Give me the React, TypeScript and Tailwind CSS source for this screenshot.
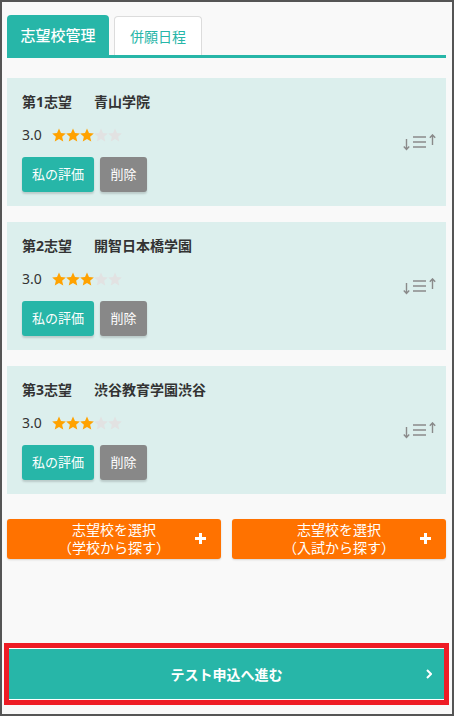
import React from "react";

const TEAL = "bg-[#27b6a8]";

const schools = [
  { rank: "第1志望", name: "青山学院" },
  { rank: "第2志望", name: "開智日本橋学園" },
  { rank: "第3志望", name: "渋谷教育学園渋谷" },
];

const Star = ({ on }: { on: boolean }) => (
  <svg width="14" height="14" viewBox="1 1.2 22 21">
    <path
      d="M12 1.5l3.1 7.1 7.6.7-5.8 5 1.8 7.5L12 17.8l-6.7 4 1.8-7.5-5.8-5 7.6-.7z"
      fill={on ? "#ffa200" : "#e2e2e2"}
    />
  </svg>
);

const SortIcon = () => (
  <svg width="34" height="17" viewBox="0 0 34 17" fill="none" stroke="#8a8a8a" strokeWidth="1.4">
    <path d="M3.5 5v10.5M0.8 12.6l2.7 2.9 2.7-2.9" />
    <path d="M10 3h13M10 8h13M10 13h13" strokeWidth="1.6" />
    <path d="M29.5 11V1M26.8 3.8l2.7-2.9 2.7 2.9" />
  </svg>
);

const Plus = () => (
  <svg width="11" height="11" viewBox="0 0 11 11">
    <rect x="4" y="0" width="3" height="11" fill="white" />
    <rect x="0" y="4" width="11" height="3" fill="white" />
  </svg>
);

const SchoolCard = ({ rank, name }: { rank: string; name: string }) => (
  <div className="flex h-[128px] items-center bg-[#dcefed] pl-[15px] pr-[9px]">
    <div className="flex-1 self-start pt-[14px]">
      <p className="text-[14px] font-bold leading-[20px] text-[#333]">
        <span className="inline-block w-[72px]">{rank}</span>
        {name}
      </p>
      <div className="mt-[13px] flex h-[20px] items-center">
        <span className="text-[14px] leading-[20px] text-[#333]">3.0</span>
        <div className="ml-[10px] flex">
          {[0, 1, 2, 3, 4].map((i) => (
            <Star key={i} on={i < 3} />
          ))}
        </div>
      </div>
      <div className="mt-[12px] flex gap-[6px]">
        <button className={`h-[35px] w-[72px] rounded-[3px] ${TEAL} text-[13px] text-white shadow-[0_2px_2px_rgba(0,0,0,0.15)]`}>
          私の評価
        </button>
        <button className="h-[35px] w-[47px] rounded-[3px] bg-[#888888] text-[13px] text-white shadow-[0_2px_2px_rgba(0,0,0,0.15)]">
          削除
        </button>
      </div>
    </div>
    <SortIcon />
  </div>
);

const PickButton = ({ sub }: { sub: string }) => (
  <button className="relative flex h-[40px] flex-1 flex-col items-center justify-center rounded-[3px] bg-[#ff7200] text-[14px] leading-[18px] text-white shadow-[0_1px_2px_rgba(0,0,0,0.15)]">
    <span>志望校を選択</span>
    <span>{sub}</span>
    <span className="absolute right-[15px] top-[14px]">
      <Plus />
    </span>
  </button>
);

const App = () => {
  return (
    <main
      className="flex h-[716px] w-[454px] flex-col border-2 border-[#555] bg-[#f9f9f9]"
      style={{ fontFamily: '"Noto Sans", "Noto Sans CJK JP", sans-serif' }}
    >
      <div className="pl-[5px] pr-[6px] pt-[13px]">
        <nav className="flex items-end gap-[5px] border-b-[3px] border-[#27b6a8]">
          <div className={`flex h-[40px] w-[102px] items-center justify-center rounded-t-[4px] ${TEAL} text-[15px] font-medium text-white`}>
            志望校管理
          </div>
          <div className="flex h-[39px] w-[88px] items-center justify-center rounded-t-[4px] border border-b-0 border-[#dcdcdc] bg-white text-[14px] text-[#27b6a8]">
            併願日程
          </div>
        </nav>
        <section className="mt-[20px] flex flex-col gap-[16px]">
          {schools.map((s) => (
            <SchoolCard key={s.rank} rank={s.rank} name={s.name} />
          ))}
        </section>
        <div className="mt-[25px] flex gap-[11px]">
          <PickButton sub="（学校から探す）" />
          <PickButton sub="（入試から探す）" />
        </div>
      </div>
      <div className="flex-1" />
      <div className="pb-[9px] pl-[2px] pr-[3px]">
        <div className="border-[5px] border-[#ee1c25]">
          <button className={`relative flex h-[52px] w-full items-center justify-center border-y border-white ${TEAL} text-[14px] font-bold text-white`}>
            テスト申込へ進む
            <svg className="absolute right-[12px] top-[20px]" width="6" height="10" viewBox="0 0 6 10" fill="none" stroke="white" strokeWidth="2">
              <path d="M1 1l4 4-4 4" />
            </svg>
          </button>
        </div>
      </div>
    </main>
  );
};

export default App;
